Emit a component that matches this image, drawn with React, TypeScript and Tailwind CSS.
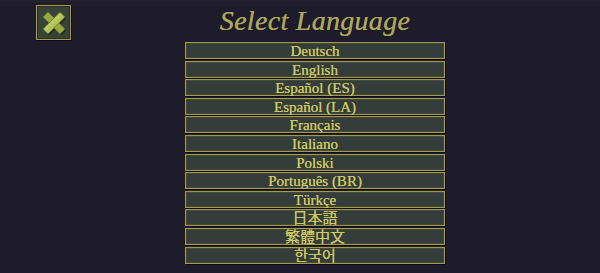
import * as React from 'react';

const LANGUAGES = [
  'Deutsch',
  'English',
  'Español (ES)',
  'Español (LA)',
  'Français',
  'Italiano',
  'Polski',
  'Português (BR)',
  'Türkçe',
  '日本語',
  '繁體中文',
  '한국어',
];

function CloseIcon() {
  return (
    <svg className="block size-[26px]" viewBox="0 0 26 26" fill="none">
      {/* shadow */}
      <g transform="translate(1.5 1.5)" opacity="0.7">
        <rect x="9.5" y="1" width="7" height="24" rx="1" transform="rotate(45 13 13)" fill="#1b1f16" />
        <rect x="9.5" y="1" width="7" height="24" rx="1" transform="rotate(-45 13 13)" fill="#1b1f16" />
      </g>
      <rect x="9.5" y="1" width="7" height="24" rx="1" transform="rotate(-45 13 13)" fill="#98a93f" stroke="#6b7a2a" strokeWidth="0.8" />
      <rect x="9.5" y="1" width="7" height="24" rx="1" transform="rotate(45 13 13)" fill="#b0c155" stroke="#6b7a2a" strokeWidth="0.8" />
      <rect x="10.5" y="2" width="2.5" height="22" transform="rotate(45 13 13)" fill="#c8d66c" opacity="0.6" />
    </svg>
  );
}

export default function App() {
  return (
    <div className="w-[600px] h-[273px] bg-[#1e1b2b] overflow-hidden flex items-start border-t-2 border-[#24212f]">
      {/* Close button */}
      <div className="ml-[36px] mt-[3px] shrink-0">
        <button className="size-[35px] flex items-center justify-center bg-[#3a4338] border-[1.5px] border-[#a89b40] shadow-[1px_1px_0_#0f0e16,inset_0_0_0_1px_#2a2f26]">
          <CloseIcon />
        </button>
      </div>

      {/* Language list */}
      <div className="ml-[114px] w-[260px] flex flex-col">
        <h1
          className="text-center text-[28px] leading-[38px] italic text-[#aca85a] tracking-[0.3px] h-[40px] [text-shadow:0_0_0.6px_#aca85a]"
          style={{ fontFamily: '"Liberation Serif", serif' }}
        >
          Select Language
        </h1>
        <div className="flex flex-col gap-[1.6px]">
          {LANGUAGES.map((lang) => (
            <button
              key={lang}
              className="h-[17px] w-full bg-[#343d39] border-[1.5px] border-[#a49a45] shadow-[1px_1px_0_#0f0e16,inset_0_0_0_0.5px_#4f5646] flex items-center justify-center text-[15px] leading-[14px] text-[#cdc863] [text-shadow:0_0_0.4px_#cdc863]"
              style={{ fontFamily: '"Liberation Serif", "Noto Sans CJK JP", "Noto Sans CJK TC", "Noto Sans CJK KR", serif' }}
            >
              <span className="pt-[1px]">{lang}</span>
            </button>
          ))}
        </div>
      </div>
    </div>
  );
}
